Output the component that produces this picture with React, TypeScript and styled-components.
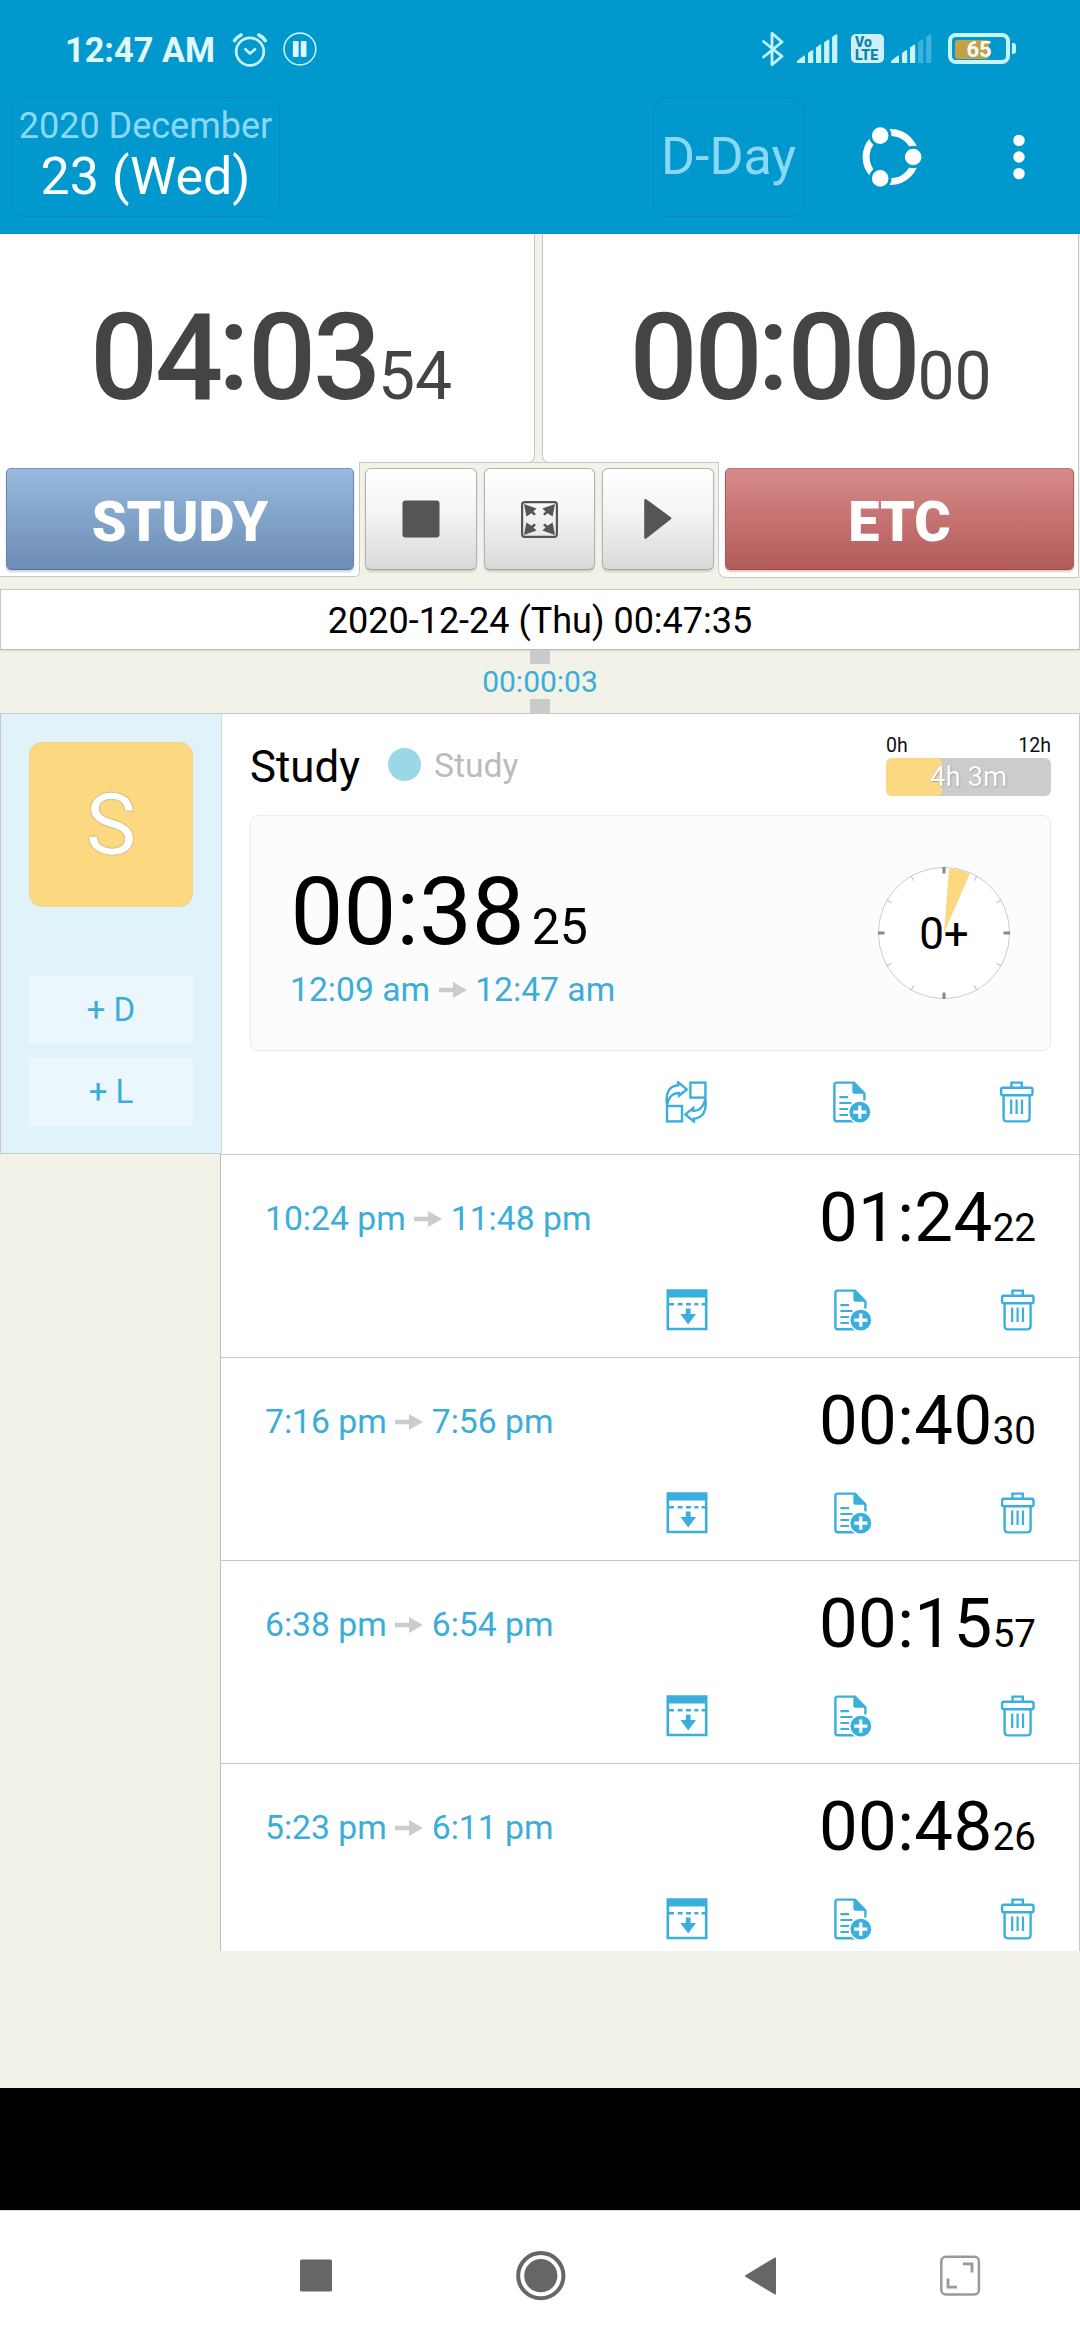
import React from "react";
import styled, { createGlobalStyle, css } from "styled-components";

const ACCENT = "#3badd9";
const ICON = "#3aafdd";
const LINE = "#c8c9c8";
const PAPER = "#f2f2e9";

const Global = createGlobalStyle`
  *, *::before, *::after { box-sizing: border-box; }
  body { margin: 0; font-family: Roboto, "Noto Sans", sans-serif; background: #fff; }
  svg { display: block; flex: none; }
`;

const Screen = styled.div`
  width: 1080px;
  height: 2340px;
  display: flex;
  flex-direction: column;
  overflow: hidden;
  background: ${PAPER};
`;

/* ---------- header ---------- */

const Header = styled.header`
  height: 234px;
  flex: none;
  background: #0199cd;
  color: #fff;
`;

const StatusBar = styled.div`
  height: 97px;
  padding: 0 64px 0 65px;
  display: flex;
  align-items: center;
  justify-content: space-between;
`;

const StatusSide = styled.div`
  display: flex;
  align-items: center;
`;

const StatusTime = styled.span`
  width: 167px;
  font-size: 34.3px;
  line-height: 40px;
  font-weight: 700;
  color: #e2f8ff;
  padding-top: 3px;
  white-space: nowrap;
`;

const AppBar = styled.div`
  display: flex;
  align-items: flex-start;
  padding: 0 0 0 11px;
`;

const BarButton = styled.div<{ $w: number }>`
  width: ${(p) => p.$w}px;
  height: 120px;
  border: 1px solid #0a88b8;
  border-radius: 14px;
  display: flex;
  flex-direction: column;
  align-items: center;
  white-space: nowrap;
`;

const MonthText = styled.div`
  margin-top: 7px;
  font-size: 36px;
  line-height: 42px;
  color: #8bd8f6;
`;

const DayText = styled.div`
  font-size: 52px;
  line-height: 60px;
`;

const DDayText = styled.div`
  margin-top: 29px;
  font-size: 52px;
  line-height: 60px;
  color: #8bd8f6;
`;

const BarGap = styled.div<{ $w: number }>`
  width: ${(p) => p.$w}px;
  flex: none;
`;

const IconSlot = styled.div<{ $top: number }>`
  margin-top: ${(p) => p.$top}px;
`;

/* ---------- timers ---------- */

const TimerRow = styled.section`
  height: 229px;
  flex: none;
  display: flex;
  justify-content: space-between;
  padding-right: 1px;
`;

const TimerPanel = styled.div<{ $side: "left" | "right" }>`
  height: 229px;
  background: #fff;
  border-bottom: 1px solid ${LINE};
  display: flex;
  align-items: baseline;
  padding-top: 64px;
  color: #444;
  ${(p) =>
    p.$side === "left"
      ? css`
          width: 535px;
          border-right: 1px solid ${LINE};
          border-bottom-right-radius: 7px;
          padding-left: 90px;
        `
      : css`
          width: 537px;
          border-left: 1px solid ${LINE};
          border-right: 1px solid ${LINE};
          border-bottom-left-radius: 7px;
          padding-left: 86.5px;
        `}
`;

const BigDigits = styled.span`
  font-size: 120px;
  line-height: 120px;
  font-weight: 500;
  letter-spacing: -3.2px;
`;

const BigColon = styled.span`
  display: inline-block;
  width: 28px;
  text-indent: -2px;
  position: relative;
  top: -10px;
`;

const SmallDigits = styled.span`
  font-size: 66px;
  line-height: 66px;
`;

const ControlRow = styled.section`
  height: 115px;
  margin-top: -1px;
  flex: none;
  display: flex;
  align-items: flex-start;
  padding-right: 1px;
`;

const Tab = styled.div<{ $side: "left" | "right" }>`
  background: #fff;
  border-bottom: 1px solid ${LINE};
  ${(p) =>
    p.$side === "left"
      ? css`
          width: 360px;
          height: 115px;
          padding: 6px 5px 0 6px;
          border-right: 1px solid ${LINE};
          border-bottom-right-radius: 5px;
        `
      : css`
          width: 361px;
          height: 116px;
          padding: 6px 4px 0 6px;
          border-left: 1px solid ${LINE};
          border-right: 1px solid ${LINE};
          border-bottom-left-radius: 8px;
        `}
`;

const ModeButton = styled.button<{ $tone: "blue" | "red" }>`
  width: 100%;
  height: 102px;
  padding: 6px 0 0;
  border: 1px solid;
  border-radius: 5px;
  font: 900 55.6px/64px Roboto, sans-serif;
  color: #fff;
  display: block;
  text-align: center;
  ${(p) =>
    p.$tone === "blue"
      ? css`
          background: linear-gradient(#98bade, #6c8cb5);
          border-color: #7095bc #6788b0 #57779f;
          box-shadow: 0 2px 2px #c7d3e0;
        `
      : css`
          background: linear-gradient(#d88a8a, #b25b59);
          border-color: #bb7575 #a95b5a #9c4b4a;
          box-shadow: 0 2px 2px #e6c4c4;
        `}
`;

const Controls = styled.div`
  flex: 1;
  height: 109px;
  display: flex;
  gap: 7px;
  padding: 6px 4px 0 5px;
  border-top: 1px solid ${LINE};
`;

const ToolButton = styled.button`
  flex: 1;
  height: 102px;
  margin-top: -1px;
  padding: 0;
  display: flex;
  align-items: center;
  justify-content: center;
  border: 1px solid #b2b2b2;
  border-bottom-color: #a3a3a3;
  border-radius: 6px;
  background: linear-gradient(#ffffff, #f6f6f6 40%, #d9d9d9);
  box-shadow: 0 2px 2px #cfcfca;
`;

/* ---------- date strip ---------- */

const DateStrip = styled.div`
  margin-top: 12px;
  height: 61px;
  flex: none;
  border: 1px solid ${LINE};
  border-bottom-color: #bdbdbd;
  background: #fff;
  box-shadow: 0 1px 2px #d5d5ce;
  font-size: 36px;
  line-height: 63px;
  text-align: center;
`;

const Link = styled.div`
  height: 63px;
  flex: none;
  display: flex;
  flex-direction: column;
  align-items: center;
  justify-content: space-between;
`;

const LinkStub = styled.i`
  width: 20px;
  height: 14px;
  background: #cacaca;
`;

const LinkText = styled.span`
  font-size: 30px;
  line-height: 34px;
  color: ${ACCENT};
`;

/* ---------- subject card ---------- */

const Card = styled.section`
  height: 441px;
  flex: none;
  display: flex;
  border: 1px solid ${LINE};
  border-bottom: 0;
  background: #fff;
`;

const CardSide = styled.div`
  width: 221px;
  padding: 28px 28px 0;
  background: #e0f3fb;
  border-right: 1px solid #cddce0;
  border-bottom: 1px solid ${LINE};
`;

const Avatar = styled.div`
  width: 164px;
  height: 165px;
  border: 1px solid #f1d38a;
  border-radius: 13px;
  background: #fcd981;
  color: #fff;
  font-size: 85px;
  line-height: 164px;
  text-align: center;
  text-shadow: 0 0 1px #8d7a4c, 0 0 1px #8d7a4c;
`;

const AddButton = styled.div<{ $top: number }>`
  margin-top: ${(p) => p.$top}px;
  height: 68px;
  background: #ebf7fc;
  color: ${ACCENT};
  font-size: 33px;
  line-height: 67px;
  text-align: center;
`;

const CardMain = styled.div`
  flex: 1;
  padding: 0 28px 0 28px;
`;

const CardHead = styled.div`
  height: 101px;
  display: flex;
  align-items: flex-start;
`;

const Subject = styled.div`
  width: 138px;
  padding-top: 28px;
  font-size: 43.8px;
  line-height: 50px;
`;

const Dot = styled.i`
  width: 33px;
  height: 33px;
  margin-top: 34px;
  border-radius: 50%;
  background: #9ad8e8;
`;

const Group = styled.div`
  flex: 1;
  margin-left: 13px;
  padding-top: 32px;
  font-size: 33.7px;
  line-height: 40px;
  color: #bbb;
`;

const Goal = styled.div`
  width: 165px;
  padding-top: 20px;
`;

const GoalScale = styled.div`
  display: flex;
  justify-content: space-between;
  font-size: 19.5px;
  line-height: 24px;
  color: #111;
`;

const GoalTrack = styled.div`
  height: 38px;
  border-radius: 6px;
  overflow: hidden;
  background: #ccc;
  display: grid;
`;

const GoalFill = styled.div`
  grid-area: 1 / 1;
  border-radius: 5px;
  background: #fcd981;
`;

const GoalText = styled.div`
  grid-area: 1 / 1;
  font-size: 27.5px;
  line-height: 38px;
  text-align: center;
  color: #fff;
  text-shadow: 0 0 1px #999, 1px 1px 1px #aaa;
`;

const Session = styled.div`
  height: 236px;
  border: 1px solid #ebebeb;
  border-radius: 8px;
  background: #fcfcfc;
  display: flex;
  justify-content: space-between;
  padding: 0 39px 0 39px;
`;

const SessionTime = styled.div`
  margin: 49px 0 0 0.6px;
  height: 94px;
  display: flex;
  align-items: baseline;
  white-space: nowrap;
`;

const SessionBig = styled.span`
  font-size: 94px;
  line-height: 94px;
`;

const SessionSmall = styled.span`
  margin-left: 7px;
  font-size: 50px;
  line-height: 50px;
`;

const Range = styled.div`
  display: flex;
  align-items: center;
  gap: 8.5px;
  font-size: 33.7px;
  line-height: 40px;
  color: ${ACCENT};
  white-space: nowrap;
`;

const SessionRange = styled.div`
  margin-top: 11px;
`;

const ClockBox = styled.div`
  margin-top: 50px;
  display: grid;
  width: 134px;
  height: 134px;
`;

const ClockFace = styled.svg`
  grid-area: 1 / 1;
`;

const ClockText = styled.span`
  grid-area: 1 / 1;
  font-size: 44px;
  line-height: 136px;
  text-align: center;
`;

const Actions = styled.div<{ $top: number; $right: number }>`
  margin-top: ${(p) => p.$top}px;
  margin-right: ${(p) => p.$right}px;
  display: flex;
  justify-content: flex-end;
  gap: 123.4px;
`;

/* ---------- records ---------- */

const Records = styled.section`
  height: 797px;
  flex: none;
  margin-left: 220px;
  overflow: hidden;
  background: #fff;
  border-left: 1px solid #bfbfbf;
  border-right: 1px solid ${LINE};
`;

const Record = styled.article`
  height: 203px;
  border-top: 1px solid ${LINE};
`;

const RecordTop = styled.div`
  display: flex;
  justify-content: space-between;
  align-items: baseline;
  height: 134px;
  padding: 28px 43px 0 44px;
`;

const RecordTime = styled.div`
  font-size: 69px;
  line-height: 70px;
  letter-spacing: 0.4px;
  white-space: nowrap;
`;

const RecordSeconds = styled.span`
  font-size: 38.5px;
  letter-spacing: 0;
`;

const RecordRange = styled.div`
  align-self: flex-start;
  margin-top: 16px;
`;

/* ---------- bottom ---------- */

const Filler = styled.div`
  flex: 1;
`;

const BlackBar = styled.div`
  height: 122px;
  flex: none;
  background: #000;
`;

const NavBar = styled.nav`
  height: 130px;
  flex: none;
  background: #fff;
  border-top: 1px solid #dedede;
  display: flex;
  align-items: center;
  padding-left: 300px;
`;

/* ---------- icons ---------- */

const AlarmIcon = () => (
  <svg width="36" height="40" viewBox="232 29 36 40" fill="none" stroke="#c5f2fd" strokeLinecap="round" strokeLinejoin="round">
    <circle cx="250" cy="51.6" r="13.8" strokeWidth="2.7" />
    <path d="M245.4 49.3L250 53.6L255 49.3" strokeWidth="2.7" />
    <path d="M234.6 40.6Q237 37 241 35M258.8 35Q263 37 265.3 40.6" strokeWidth="3.6" />
  </svg>
);

const PauseIcon = () => (
  <svg width="36" height="36" viewBox="282 31 36 36">
    <circle cx="299.9" cy="49" r="15.9" fill="none" stroke="#c5f2fd" strokeWidth="1.6" />
    <rect x="292.9" y="41" width="5.7" height="16" rx="1" fill="#dff7ff" />
    <rect x="300.8" y="41" width="5.7" height="16" rx="1" fill="#dff7ff" />
  </svg>
);

const BluetoothIcon = () => (
  <svg width="26" height="38" viewBox="761 30 26 38" fill="none" stroke="#c5f2fd" strokeWidth="2.8" strokeLinejoin="round" strokeLinecap="round">
    <path d="M764.5 41.5L783 56.3L773 64.8V33.2L783 42L764.5 57" />
  </svg>
);

const bars = [
  { x: 0, w: 8, l: 61, r: 55.4 },
  { x: 11, w: 5.2, l: 53, r: 50 },
  { x: 19, w: 5.2, l: 47.5, r: 44.4 },
  { x: 27.1, w: 5.2, l: 42.2, r: 39.4 },
  { x: 35.1, w: 5.2, l: 37, r: 34 },
];

const SignalIcon = ({ lit }: { lit: number }) => (
  <svg width="41" height="38" viewBox="0 30 41 38">
    {bars.map((b, i) => (
      <path
        key={b.x}
        fill={i < lit ? "#c9f3fd" : "#3db2dc"}
        d={`M${b.x} 63V${b.l}L${b.x + b.w - 1} ${b.r}L${b.x + b.w} ${b.r + 0.4}V63Z`}
      />
    ))}
  </svg>
);

const VolteBadge = styled.div`
  width: 33px;
  height: 29px;
  margin: 0 7px 0 13px;
  border-radius: 5px;
  background: #cdf0fa;
  color: #0a84b0;
  font-size: 14px;
  line-height: 13px;
  font-weight: 900;
  padding: 1.5px 0 0 4px;
  letter-spacing: 0.1px;
  display: flex;
  flex-direction: column;
`;

const BatteryShell = styled.div`
  width: 62px;
  height: 31px;
  margin-left: 16px;
  border: 4px solid #c9f3fd;
  border-radius: 8px;
  padding: 3px;
  display: grid;
`;

const BatteryFill = styled.i`
  grid-area: 1 / 1;
  width: 34px;
  border-radius: 3px;
  background: #c4a144;
`;

const BatteryText = styled.b`
  grid-area: 1 / 1;
  font-size: 22px;
  line-height: 19px;
  font-weight: 700;
  color: #f4fcff;
  text-align: center;
`;

const BatteryNub = styled.i`
  width: 4px;
  height: 11px;
  margin-left: 2px;
  border-radius: 0 3px 3px 0;
  background: #c9f3fd;
`;

const ShareIcon = () => (
  <svg width="64" height="64" viewBox="860 125 64 64">
    <circle cx="890.7" cy="157" r="24.6" fill="none" stroke="#fff" strokeWidth="7" />
    {[
      [880.2, 135.6],
      [913.2, 157],
      [880.2, 178.4],
    ].map(([x, y]) => (
      <circle key={y} cx={x} cy={y} r="9.8" fill="#fff" stroke="#0199cd" strokeWidth="3" />
    ))}
  </svg>
);

const MenuIcon = () => (
  <svg width="14" height="50" viewBox="0 0 14 50" fill="#fff">
    <circle cx="7" cy="8.4" r="5.7" />
    <circle cx="7" cy="25" r="5.7" />
    <circle cx="7" cy="41.6" r="5.7" />
  </svg>
);

const StopIcon = () => (
  <svg width="38" height="38" viewBox="0 0 38 38">
    <rect x="0.5" y="0.5" width="37" height="37" rx="3" fill="#555" />
  </svg>
);

const ExpandIcon = () => (
  <svg width="37" height="37" viewBox="0 0 37 37" fill="#555">
    <rect x="1.1" y="1.1" width="34.8" height="34.8" rx="2.6" fill="none" stroke="#555" strokeWidth="2.2" />
    {["", "matrix(-1 0 0 1 37 0)", "matrix(1 0 0 -1 0 37)", "matrix(-1 0 0 -1 37 37)"].map((t) => (
      <path key={t} transform={t} d="M3 3L15.6 7.6L12.4 10.4L15 13L13.2 14.6L10.4 12.2L5.4 15.6Z" />
    ))}
  </svg>
);

const PlayIcon = () => (
  <svg width="28" height="42" viewBox="0 0 28 42">
    <path d="M1.5 2.2L26 20.3L1.5 39.5Z" fill="#555" stroke="#555" strokeWidth="2.6" strokeLinejoin="round" />
  </svg>
);

const Arrow = () => (
  <svg width="28" height="16" viewBox="0 0 28 16">
    <path d="M0 5.7H14V0L28 8L14 16V10.3H0Z" fill="#ccc" />
  </svg>
);

const SwapIcon = () => (
  <svg width="42" height="42" viewBox="0 0 42 42" fill="none" stroke={ICON} strokeWidth="2.4" strokeLinejoin="miter">
    <rect x="25.4" y="1.6" width="15" height="15" />
    <rect x="2" y="25" width="15" height="15.4" />
    <path d="M2 23.6C.2 12 4.5 4.6 13.2 4.2V1.4L21.8 8.4L14 14.8V12C8.6 11.4 4 15.6 2 23.6Z" />
    <path d="M40.4 18C42 30 37.7 37.2 29 37.6V40.6L20.4 33.4L28.2 27V29.8C33.6 30.4 38.2 26.2 40.4 18Z" />
  </svg>
);

const NoteIcon = () => (
  <svg width="42" height="42" viewBox="0 0 42 42" fill="none" stroke={ICON} strokeWidth="2.4">
    <path d="M23 40.2H5.6Q3.4 40.2 3.4 37.8V4Q3.4 1.6 5.6 1.6H23L33.4 12.4V19.5" />
    <path d="M21.4 1.6L34 12.8H24Q21.4 12.8 21.4 10.4Z" fill={ICON} stroke="none" />
    <path d="M8.4 16.2H17M8.4 22H20.6M8.4 28H17.6M8.4 34H17" strokeWidth="2.2" />
    <circle cx="28.8" cy="31.2" r="11.9" fill="#fff" stroke="none" />
    <circle cx="28.8" cy="31.2" r="10.4" fill={ICON} stroke="none" />
    <path d="M28.8 24.6V37.8M22.2 31.2H35.4" stroke="#fff" strokeWidth="3.2" />
  </svg>
);

const TrashIcon = () => (
  <svg width="42" height="42" viewBox="0 0 42 42" fill="none" stroke={ICON} strokeWidth="2.4">
    <rect x="5.1" y="6.8" width="31.4" height="7.4" rx="1.8" />
    <path d="M15.5 6.4V1.6H25.8V6.4" />
    <path d="M7.6 14.4V36.4Q7.6 40.4 11.4 40.4H29.8Q33.6 40.4 33.6 36.4V14.4" />
    <path d="M15.2 18.6V33M20.6 18.6V33M26 18.6V33" strokeWidth="2.2" />
  </svg>
);

const MergeIcon = () => (
  <svg width="42" height="42" viewBox="0 0 42 42" fill={ICON}>
    <path d="M.5 .3H41.5V41.3H.5ZM3.1 8.4V38.7H38.9V8.4Z" fillRule="evenodd" />
    <path d="M3 15.2H8M11.6 15.2H16.6M20 15.2H25M28.4 15.2H32.4M35.6 15.2H39" stroke={ICON} strokeWidth="2.4" />
    <path d="M19.8 19.6H24.6V25H30L22.2 35.4L14.4 25H19.8Z" />
  </svg>
);

const ticks = Array.from({ length: 12 }, (_, i) => i);
const onFace = (deg: number, r: number) => {
  const a = (deg * Math.PI) / 180;
  return `${(67 + r * Math.sin(a)).toFixed(2)} ${(67 - r * Math.cos(a)).toFixed(2)}`;
};

const Clock = () => (
  <ClockBox>
    <ClockFace width="134" height="134" viewBox="0 0 134 134">
      <circle cx="67" cy="67" r="65.6" fill="#fff" stroke="#ccc" strokeWidth="1" />
      <path d={`M67 67L${onFace(4.5, 65)}A65 65 0 0 1 ${onFace(23.5, 65)}Z`} fill="#fcd981" />
      {ticks.map((i) => (
        <path
          key={i}
          d={`M${onFace(i * 30, 66)}L${onFace(i * 30, i % 3 ? 60.5 : 59.5)}`}
          stroke={i % 3 ? "#c4c4c4" : "#888"}
          strokeWidth={i % 3 ? 1.1 : 3}
        />
      ))}
    </ClockFace>
    <ClockText>0+</ClockText>
  </ClockBox>
);

const NavIcons = () => (
  <>
    <svg width="32" height="50" viewBox="300 2250 32 50">
      <rect x="300" y="2258.5" width="32" height="32" rx="1.5" fill="#666" />
    </svg>
    <BarGap $w={184} />
    <svg width="50" height="50" viewBox="515.6 2250 50 50">
      <circle cx="540.4" cy="2274.7" r="22.6" fill="none" stroke="#666" strokeWidth="4" />
      <circle cx="540.4" cy="2274.7" r="16.6" fill="#666" />
    </svg>
    <BarGap $w={178} />
    <svg width="34" height="50" viewBox="744 2250 34 50">
      <path d="M775 2257.5L746 2275L775 2292.5Z" fill="#666" stroke="#666" strokeWidth="2" strokeLinejoin="round" />
    </svg>
    <BarGap $w={161} />
    <svg width="42" height="50" viewBox="938 2250 42 50" fill="none" stroke="#999">
      <rect x="940.3" y="2255.8" width="37.6" height="37.6" rx="4.5" strokeWidth="2.5" />
      <path d="M962 2262.9H971V2271.5M956 2286.1H947V2277.5" strokeWidth="2.8" />
    </svg>
  </>
);

/* ---------- page ---------- */

const records = [
  { from: "10:24 pm", to: "11:48 pm", time: "01:24", sec: "22" },
  { from: "7:16 pm", to: "7:56 pm", time: "00:40", sec: "30" },
  { from: "6:38 pm", to: "6:54 pm", time: "00:15", sec: "57" },
  { from: "5:23 pm", to: "6:11 pm", time: "00:48", sec: "26" },
];

const TimeRange = ({ from, to }: { from: string; to: string }) => (
  <Range>
    <span>{from}</span>
    <Arrow />
    <span>{to}</span>
  </Range>
);

const Timer = ({ side, h, m, s }: { side: "left" | "right"; h: string; m: string; s: string }) => (
  <TimerPanel $side={side}>
    <BigDigits>
      {h}
      <BigColon>:</BigColon>
      {m}
    </BigDigits>
    <SmallDigits>{s}</SmallDigits>
  </TimerPanel>
);

export default function App() {
  return (
    <Screen>
      <Global />
      <Header>
        <StatusBar>
          <StatusSide>
            <StatusTime>12:47 AM</StatusTime>
            <AlarmIcon />
            <BarGap $w={14} />
            <PauseIcon />
          </StatusSide>
          <StatusSide>
            <BluetoothIcon />
            <BarGap $w={11} />
            <SignalIcon lit={5} />
            <VolteBadge>
              <span>Vo</span>
              <span>LTE</span>
            </VolteBadge>
            <SignalIcon lit={3} />
            <BatteryShell>
              <BatteryFill />
              <BatteryText>65</BatteryText>
            </BatteryShell>
            <BatteryNub />
          </StatusSide>
        </StatusBar>
        <AppBar>
          <BarButton $w={269}>
            <MonthText>2020 December</MonthText>
            <DayText>23 (Wed)</DayText>
          </BarButton>
          <BarGap $w={373} />
          <BarButton $w={151}>
            <DDayText>D-Day</DDayText>
          </BarButton>
          <BarGap $w={56} />
          <IconSlot $top={28}>
            <ShareIcon />
          </IconSlot>
          <BarGap $w={88} />
          <IconSlot $top={35}>
            <MenuIcon />
          </IconSlot>
        </AppBar>
      </Header>

      <TimerRow>
        <Timer side="left" h="04" m="03" s="54" />
        <Timer side="right" h="00" m="00" s="00" />
      </TimerRow>
      <ControlRow>
        <Tab $side="left">
          <ModeButton $tone="blue">STUDY</ModeButton>
        </Tab>
        <Controls>
          <ToolButton>
            <StopIcon />
          </ToolButton>
          <ToolButton>
            <ExpandIcon />
          </ToolButton>
          <ToolButton>
            <PlayIcon />
          </ToolButton>
        </Controls>
        <Tab $side="right">
          <ModeButton $tone="red">ETC</ModeButton>
        </Tab>
      </ControlRow>

      <DateStrip>2020-12-24 (Thu) 00:47:35</DateStrip>
      <Link>
        <LinkStub />
        <LinkText>00:00:03</LinkText>
        <LinkStub />
      </Link>

      <Card>
        <CardSide>
          <Avatar>S</Avatar>
          <AddButton $top={69}>+ D</AddButton>
          <AddButton $top={14}>+ L</AddButton>
        </CardSide>
        <CardMain>
          <CardHead>
            <Subject>Study</Subject>
            <Dot />
            <Group>Study</Group>
            <Goal>
              <GoalScale>
                <span>0h</span>
                <span>12h</span>
              </GoalScale>
              <GoalTrack>
                <GoalFill style={{ width: `${(243 / 720) * 100}%` }} />
                <GoalText>4h 3m</GoalText>
              </GoalTrack>
            </Goal>
          </CardHead>
          <Session>
            <div>
              <SessionTime>
                <SessionBig>00:38</SessionBig>
                <SessionSmall>25</SessionSmall>
              </SessionTime>
              <SessionRange>
                <TimeRange from="12:09 am" to="12:47 am" />
              </SessionRange>
            </div>
            <Clock />
          </Session>
          <Actions $top={30} $right={13}>
            <SwapIcon />
            <NoteIcon />
            <TrashIcon />
          </Actions>
        </CardMain>
      </Card>

      <Records>
        {records.map((r) => (
          <Record key={r.from}>
            <RecordTop>
              <RecordRange>
                <TimeRange from={r.from} to={r.to} />
              </RecordRange>
              <RecordTime>
                {r.time}
                <RecordSeconds>{r.sec}</RecordSeconds>
              </RecordTime>
            </RecordTop>
            <Actions $top={0} $right={40}>
              <MergeIcon />
              <NoteIcon />
              <TrashIcon />
            </Actions>
          </Record>
        ))}
      </Records>

      <Filler />
      <BlackBar />
      <NavBar>
        <NavIcons />
      </NavBar>
    </Screen>
  );
}
